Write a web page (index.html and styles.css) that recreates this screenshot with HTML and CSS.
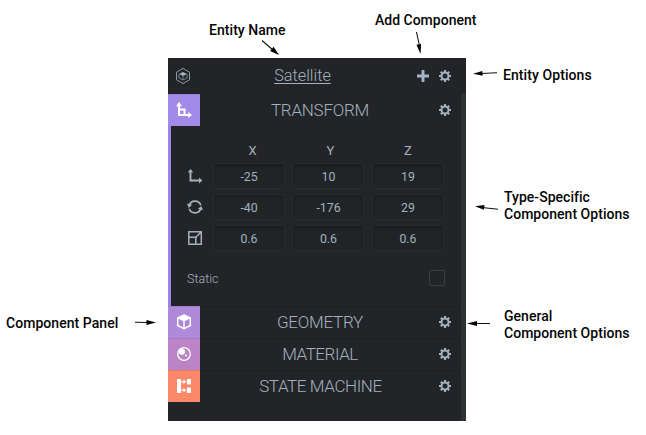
FILE: index.html
```html
<!DOCTYPE html>
<html lang="en">
<head>
<meta charset="utf-8">
<title>Entity panel</title>
<link rel="stylesheet" href="styles.css">
</head>
<body>
<svg class="defs" width="0" height="0" aria-hidden="true">
  <symbol id="gear" viewBox="0 0 12 12">
    <circle cx="6" cy="6" r="3.500" fill="none" stroke="currentColor" stroke-width="2"/>
    <path d="M6 0v2M6 10v2M0 6h2M10 6h2M1.800 1.800l1.400 1.400M8.800 8.800l1.400 1.400M1.800 10.200l1.400-1.400M8.800 3.200l1.400-1.400" stroke="currentColor" stroke-width="2.100"/>
  </symbol>
</svg>
<main class="figure">
  <section class="panel">
    <header class="entity">
      <svg class="entity-icon" width="16" height="18" viewBox="0 0 16 18"><path d="M8 1.400l6.500 3.800v7.600L8 16.600l-6.500-3.800V5.200z" fill="none" stroke="#8d9aa6"/><path d="M8 5l4 2-4 2-4-2z" fill="#a3b2bf"/><path d="M4 7v4l4 2 4-2V7M8 9v4" fill="none" stroke="#80909c" stroke-width=".9"/></svg>
      <h1>Satellite</h1>
      <svg class="plus" width="12" height="12" viewBox="0 0 12 12"><path d="M6 0v12M0 6h12" stroke="#a4b5c5" stroke-width="2.900"/></svg>
      <svg class="gear" width="12" height="12"><use href="#gear"/></svg>
    </header>
    <div class="scroller">
      <div class="components">
        <div class="row">
          <span class="tab transform"><svg width="16" height="16" viewBox="0 0 16 16"><path d="M3 2v11h11M3 7.500h5.500V13" fill="none" stroke="#fff" stroke-width="2"/><path d="M0 4.200L3 0l3 4.200zM12.300 10L16 13l-3.700 3z" fill="#fff"/></svg></span>
          <h2 class="t1">TRANSFORM</h2>
          <svg class="gear" width="12" height="12"><use href="#gear"/></svg>
        </div>
        <div class="body">
          <div class="grid">
            <span></span><b class="x">X</b><b class="y">Y</b><b class="z">Z</b>
            <svg width="16" height="16" viewBox="0 0 16 16"><path d="M3.500 2v10.500H14" fill="none" stroke="#a2b1bd" stroke-width="1.900"/><path d="M.8 4.400L3.500 1l2.700 3.400zM12 9.500l3.400 3-3.400 3z" fill="#a2b1bd"/></svg>
            <span class="field">-25</span><span class="field">10</span><span class="field">19</span>
            <svg width="16" height="16" viewBox="0 0 16 16"><path d="M2.200 6.500A6.100 6.100 0 0 1 13.800 6.200M13.800 9.500A6.100 6.100 0 0 1 2.200 9.800" fill="none" stroke="#a2b1bd" stroke-width="1.700"/><path d="M0 4.500l5.200 1.300L1.700 9zM16 11.300l-5.200-1.200L14.300 7z" fill="#a2b1bd"/></svg>
            <span class="field">-40</span><span class="field">-176</span><span class="field">29</span>
            <svg width="16" height="16" viewBox="0 0 16 16"><path d="M1.800 1.800h12.500v12.500H1.800zM1.800 7.300h7v7M8.800 7.300l5-5" fill="none" stroke="#a2b1bd" stroke-width="1.500"/></svg>
            <span class="field">0.6</span><span class="field">0.6</span><span class="field">0.6</span>
          </div>
          <div class="static"><span>Static</span><i class="check"></i></div>
        </div>
        <div class="row">
          <span class="tab geometry"><svg width="16" height="16" viewBox="0 0 16 16"><path d="M8 1l6.300 3v7.500L8 14.700l-6.300-3.200V4zM8 7.500v7" fill="none" stroke="#fff" stroke-width="1.500"/><path d="M8 1l6.500 3.200L8 7.500 1.500 4.200z" fill="#fff"/></svg></span>
          <h2 class="t2">GEOMETRY</h2>
          <svg class="gear" width="12" height="12"><use href="#gear"/></svg>
        </div>
        <div class="row">
          <span class="tab material"><svg width="16" height="16" viewBox="0 0 16 16"><circle cx="8" cy="8" r="6.300" fill="none" stroke="#fff" stroke-width="1.300"/><circle cx="5.800" cy="5.600" r="3.200" fill="#fff"/><circle cx="10" cy="9.500" r="1.100" fill="#fff"/></svg></span>
          <h2 class="t3">MATERIAL</h2>
          <svg class="gear" width="12" height="12"><use href="#gear"/></svg>
        </div>
        <div class="row">
          <span class="tab state"><svg width="16" height="16" viewBox="0 0 16 16"><path d="M1 1h4v14H1zM11 1h4v5.500h-4zM11 9.500h4V15h-4z" fill="#fff"/><path d="M5 3.800h4M5 12.200h4" stroke="#fff" stroke-width="1.300"/><path d="M7.500 1.500l3 2.300-3 2.300zM7.500 9.900l3 2.300-3 2.300z" fill="#fff"/></svg></span>
          <h2 class="t4">STATE MACHINE</h2>
          <svg class="gear" width="12" height="12"><use href="#gear"/></svg>
        </div>
      </div>
      <div class="scrollbar"></div>
    </div>
  </section>

  <p class="note n-name">Entity Name</p>
  <p class="note n-add">Add Component</p>
  <p class="note n-entity">Entity Options</p>
  <p class="note n-type">Type-Specific<br>Component Options</p>
  <p class="note n-general">General<br>Component Options</p>
  <p class="note n-panel">Component Panel</p>
  <svg class="arrows" width="646" height="435" viewBox="0 0 646 435">
    <path d="M262 40.500L273 50M416.500 32L419.500 46M497 72.700L481 73.500M498 209.300L482 207.500M490 323.500H475M135 322.300L148 322.500" stroke="#111" stroke-width="1.100"/>
    <path d="M279 55l-8.800-4 3.400-4.200zM420.500 54l-4-9.200 4.600-.9zM473 73.700l9.300-2.700.4 4.800zM475 206.300l9.500-1.300-.6 4.800zM467 323.500l10-2.600v5.200zM156 322.500l-9.500 2.600v-5.200z"/>
  </svg>
</main>
</body>
</html>
```

FILE: styles.css
```css
* { box-sizing: border-box; }
body { margin: 0; background: #fff; font-family: Roboto, "Liberation Sans", sans-serif; }
h1, h2, p { margin: 0; }
svg { display: block; }
.defs { position: absolute; }
.figure { position: relative; width: 646px; height: 435px; padding: 58px 0 0 168px; overflow: hidden; }
.panel { width: 298px; height: 363px; background: #222427; color: #a2b1bf; }
.entity { height: 36px; display: flex; align-items: center; padding-right: 15px; }
.entity-icon { margin-left: 7px; }
.entity h1 { flex: 1; padding-right: 3px; text-align: center; font-size: 16.300px; line-height: 36px; font-weight: 300; text-decoration: underline; text-decoration-thickness: 1px; text-underline-offset: 2px; }
.plus { margin-right: 10px; }
.gear { color: #a2b1bd; flex: none; }
.scroller { display: flex; height: 327px; }
.components { width: 293px; }
.scrollbar { width: 5px; background: #2d3235; }
.row { height: 32px; display: flex; align-items: center; padding-right: 10px; box-shadow: inset 0 1px #1e2023; }
.row h2 { flex: 1; padding-left: 1px; text-align: center; font-size: 17px; line-height: 32px; font-weight: 300; letter-spacing: -.25px; }
.row .t3 { letter-spacing: -.45px; }
.row .t4 { padding-left: 2px; letter-spacing: -.4px; }
.tab { width: 32px; height: 32px; display: grid; place-items: center; box-shadow: inset 0 1px rgba(0, 0, 0, .08); }
.transform { background: #a28be8; }
.geometry { background: #af89da; }
.material { background: #ba84c7; }
.state { background: #fa8869; }
.body { height: 180px; border-left: 3px solid #9b87ec; padding: 17px 16px 0 16px; }
.grid { display: grid; grid-template-columns: 18px 72px 72px 72px; grid-template-rows: 15px 26px 26px 26px; row-gap: 5px; column-gap: 7.500px; align-items: center; width: 258px; }
.grid b { font-size: 13px; line-height: 15px; font-weight: 400; text-align: center; }
.grid .x { padding-left: 8px; }
.grid .y { padding-left: 5px; }
.grid .z { padding-left: 1px; }
.field { height: 26px; line-height: 26px; padding-left: 1px; border: 1px solid #292b2e; border-radius: 2px; background: #202427; box-shadow: inset 0 2px 3px #1b1e21; font-size: 12.300px; text-align: center; }
.static { display: flex; justify-content: space-between; align-items: center; height: 16px; margin-top: 19px; font-size: 12.500px; font-weight: 300; }
.check { width: 16px; height: 16px; border: 1px solid #3b3d41; border-radius: 2px; }
.note { position: absolute; color: #050505; font-size: 14px; line-height: 17px; font-weight: 500; white-space: nowrap; }
.n-name { left: 209px; top: 22px; letter-spacing: .05px; }
.n-add { left: 375px; top: 12px; }
.n-entity { left: 503px; top: 67px; letter-spacing: .08px; }
.n-type { left: 504px; top: 189px; letter-spacing: .03px; }
.n-general { left: 504px; top: 308px; letter-spacing: .03px; }
.n-panel { left: 6px; top: 315px; letter-spacing: .05px; }
.arrows { position: absolute; left: 0; top: 0; }
```
